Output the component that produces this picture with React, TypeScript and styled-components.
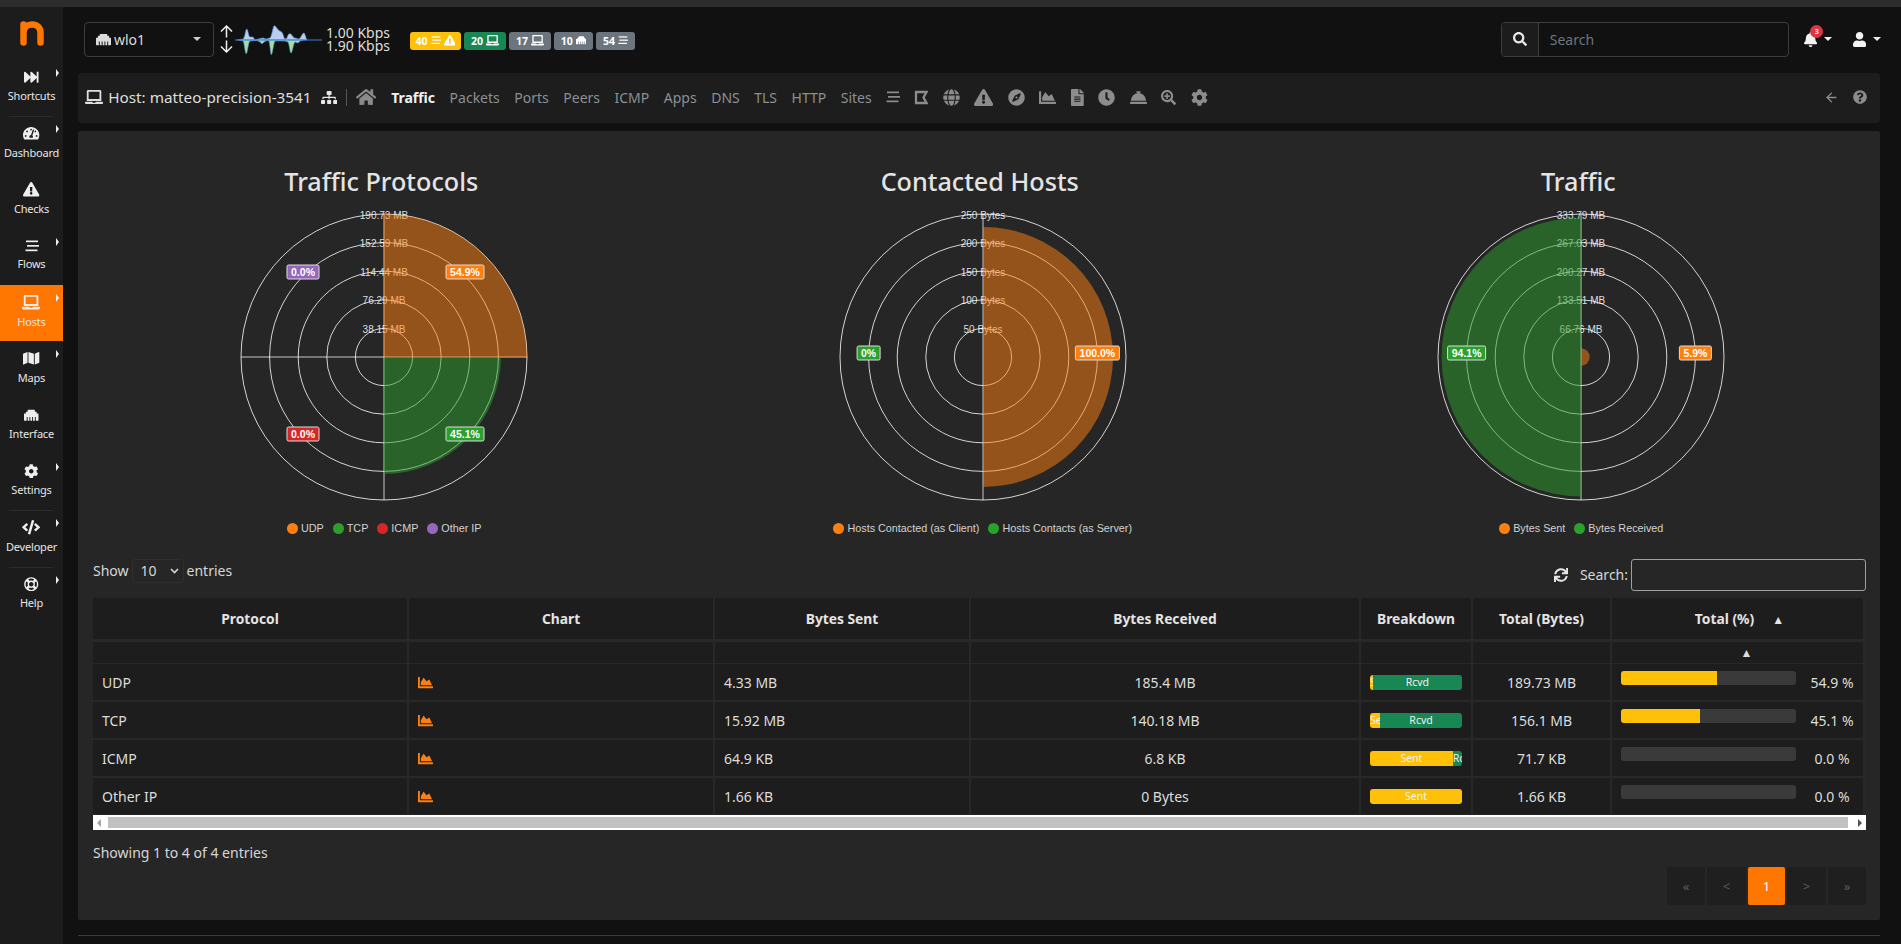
import React from "react";
import styled, { createGlobalStyle } from "styled-components";
import { ArrowLeft } from "lucide-react";
import {
  FaFastForward,
  FaTachometerAlt,
  FaExclamationTriangle,
  FaLaptop,
  FaMap,
  FaEthernet,
  FaCog,
  FaCode,
  FaRegLifeRing,
  FaSearch,
  FaBell,
  FaUser,
  FaSync,
  FaChartArea,
  FaFileAlt,
  FaClock,
  FaConciergeBell,
  FaSearchPlus,
  FaCompass,
  FaGlobe,
  FaQuestionCircle,
  FaSitemap,
  FaHome,
} from "react-icons/fa";

const UI_FONT = `"Noto Sans", "Open Sans", sans-serif`;

const GlobalStyle = createGlobalStyle`
  html, body {
    margin: 0;
    padding: 0;
    background: #111111;
    color: #e3e3e3;
    font-family: ${UI_FONT};
    font-size: 14px;
    overflow: hidden;
  }
  * { box-sizing: border-box; }
`;

// react-icons draws everything in a 1em square, these glyphs are not square
const LaptopIcon = styled(FaLaptop)`
  width: 1.25em;
`;
const WarnIcon = styled(FaExclamationTriangle)`
  width: 1.125em;
`;
const GaugeIcon = styled(FaTachometerAlt)`
  width: 1.125em;
`;
const MapIcon = styled(FaMap)`
  width: 1.125em;
`;
const CodeIcon = styled(FaCode)`
  width: 1.25em;
`;
const SitemapIcon = styled(FaSitemap)`
  width: 1.25em;
`;
const HouseIcon = styled(FaHome)`
  width: 1.125em;
`;
const BellIcon = styled(FaBell)`
  width: 0.875em;
`;
const UserIcon = styled(FaUser)`
  width: 0.875em;
`;
const FileIcon = styled(FaFileAlt)`
  width: 0.75em;
`;

const Page = styled.div`
  width: 1901px;
  height: 944px;
  display: flex;
  flex-direction: column;
  background: #111111;
`;

const TopStrip = styled.div`
  height: 7px;
  background: #2c2c2c;
  flex: none;
`;

const Body = styled.div`
  flex: 1;
  display: flex;
  min-height: 0;
`;

const Sidebar = styled.nav`
  width: 63px;
  flex: none;
  background: #1c1c1c;
  display: flex;
  flex-direction: column;
`;

const Logo = styled.div`
  height: 53px;
  display: flex;
  align-items: center;
  justify-content: center;
`;

const SideItem = styled.div<{ $active?: boolean; $caret?: boolean; $plain?: boolean }>`
  position: relative;
  height: 56.3px;
  padding-bottom: 4px;
  display: flex;
  flex-direction: column;
  align-items: center;
  justify-content: center;
  gap: 5px;
  color: #e6e6e6;
  font-size: 11px;
  line-height: 13px;
  letter-spacing: -0.2px;
  background: ${(p) => (p.$active ? "#ff7700" : "transparent")};

  svg {
    font-size: 14.5px;
    color: #eeeeee;
  }

  &::after {
    content: "";
    display: ${(p) => (p.$caret ? "block" : "none")};
    position: absolute;
    right: 4px;
    top: 9px;
    border-left: 3px solid #eeeeee;
    border-top: 4px solid transparent;
    border-bottom: 4px solid transparent;
  }

  & + &::before {
    content: "";
    position: absolute;
    left: 9px;
    right: 10px;
    top: 0;
    height: 1px;
    background: #2b2b2b;
    display: ${(p) => (p.$plain ? "none" : "block")};
  }
`;

const Main = styled.main`
  flex: 1;
  min-width: 0;
  padding: 0 21px 0 15px;
  display: flex;
  flex-direction: column;
`;

const TopBar = styled.header`
  height: 66px;
  flex: none;
  display: flex;
  align-items: center;
  padding: 0 0 2px 6px;
  margin-right: -1px;
`;

const IfaceSelect = styled.div`
  width: 130px;
  height: 35px;
  border: 1px solid #3d3d3d;
  border-radius: 4px;
  display: flex;
  align-items: center;
  padding: 0 12px 0 11px;
  gap: 3px;
  font-size: 14px;
  color: #dcdcdc;

  svg {
    font-size: 15px;
    color: #dcdcdc;
  }
`;

const Caret = styled.span<{ $color?: string }>`
  display: inline-block;
  border-top: 4px solid ${(p) => p.$color || "#cfcfcf"};
  border-left: 4px solid transparent;
  border-right: 4px solid transparent;
`;

const SelectLabel = styled.span`
  flex: 1;
`;

const Arrows = styled.svg`
  margin-left: 6px;
  flex: none;
`;

const Spark = styled.svg`
  margin-left: 2px;
  flex: none;
`;

const Rates = styled.div`
  margin-left: 4px;
  width: 84px;
  font-size: 14px;
  line-height: 13px;
  color: #dedede;
`;

const Badges = styled.div`
  display: flex;
  gap: 3px;
  margin-top: 3px;
`;

const Badge = styled.span<{ $bg: string; $w: number }>`
  height: 18px;
  width: ${(p) => p.$w}px;
  display: flex;
  align-items: center;
  justify-content: center;
  gap: 3px;
  border-radius: 3px;
  background: ${(p) => p.$bg};
  color: #fff;
  font-size: 10.5px;
  font-weight: 700;

  svg {
    font-size: 10.5px;
  }
`;

const SearchBox = styled.div`
  margin-left: auto;
  width: 288px;
  height: 35px;
  border: 1px solid #3d3d3d;
  border-radius: 4px;
  display: flex;
  align-items: stretch;
`;

const SearchAddon = styled.div`
  width: 37px;
  background: #1c1c1c;
  border-right: 1px solid #3d3d3d;
  border-radius: 3px 0 0 3px;
  display: flex;
  align-items: center;
  justify-content: center;
  font-size: 14px;
  color: #e8e8e8;
`;

const SearchHint = styled.div`
  padding-left: 11px;
  display: flex;
  align-items: center;
  font-size: 14px;
  color: #6d757d;
`;

const UserTool = styled.div<{ $left: number }>`
  position: relative;
  margin-left: ${(p) => p.$left}px;
  display: flex;
  align-items: center;
  gap: 7px;
  color: #f2f2f2;
  font-size: 15px;
`;

const Count = styled.span`
  position: absolute;
  left: 6.5px;
  top: -7px;
  width: 13px;
  height: 13px;
  border-radius: 50%;
  background: #dc3545;
  color: #fff;
  font-size: 7px;
  font-weight: 700;
  display: flex;
  align-items: center;
  justify-content: center;
`;

const NavBar = styled.div`
  height: 50px;
  flex: none;
  background: #1d1d1d;
  border-radius: 4px;
  display: flex;
  align-items: center;
  padding: 0 13px 2px 7px;
  color: #8a8f94;
`;

const HostTitle = styled.div`
  display: flex;
  align-items: center;
  gap: 5px;
  color: #dedede;
  font-size: 15.3px;
  svg {
    font-size: 14.5px;
  }
`;

const TitleTool = styled.span`
  margin-left: 9px;
  color: #e8e8e8;
  font-size: 13px;
  padding-right: 9px;
  border-right: 1px solid #555;
  height: 17px;
  display: flex;
  align-items: center;
`;

const HomeLink = styled.span`
  margin-left: 9px;
  margin-right: 15px;
  font-size: 18px;
  line-height: 0;
  color: #8a8a8a;
`;

const Tabs = styled.div`
  display: flex;
  gap: 14.5px;
  font-size: 14px;
`;

const Tab = styled.span<{ $active?: boolean }>`
  color: ${(p) => (p.$active ? "#f2f2f2" : "#8a9096")};
  font-weight: ${(p) => (p.$active ? 700 : 400)};
`;

const IconTabs = styled.div`
  display: flex;
  align-items: center;
  margin-left: 14px;
  gap: 14.5px;
  color: #8c8c8c;
  font-size: 17px;
  svg {
    display: block;
  }
`;

const NavRight = styled.div`
  margin-left: auto;
  display: flex;
  align-items: center;
  gap: 14px;
  font-size: 14px;
  color: #8c8c8c;
`;

const Panel = styled.section`
  margin-top: 8px;
  height: 789px;
  flex: none;
  background: #262626;
  border-radius: 2px;
  padding: 0 15px;
`;

const ChartRow = styled.div`
  display: grid;
  grid-template-columns: repeat(3, 598.5px);
  margin-left: -11px;
  padding-top: 32px;
  height: 421px;
`;

const ChartCol = styled.div`
  display: flex;
  flex-direction: column;
  align-items: center;
`;

const ChartTitle = styled.h3`
  margin: 0;
  height: 36px;
  font-size: 25.2px;
  line-height: 36px;
  font-weight: 500;
  color: #e4e4e4;
`;

const ChartSvg = styled.svg`
  display: block;
  margin-top: 8px;
`;

const Legend = styled.div`
  display: flex;
  justify-content: center;
  gap: 9px;
  margin-top: 15px;
  padding-left: 6px;
  font-family: "Liberation Sans", Arial, sans-serif;
  font-size: 10.8px;
  line-height: 12px;
  color: #d2d2d2;
`;

const LegendItem = styled.span<{ $color: string }>`
  display: flex;
  align-items: center;
  gap: 3px;
  &::before {
    content: "";
    width: 11px;
    height: 11px;
    border-radius: 50%;
    background: ${(p) => p.$color};
  }
`;

const TableTools = styled.div`
  height: 46px;
  display: flex;
  align-items: center;
  justify-content: space-between;
  font-size: 14px;
  color: #d6d6d6;
`;

const Entries = styled.label`
  display: flex;
  align-items: center;
  gap: 3px;
  margin-top: -9px;
`;

const EntriesSelect = styled.span`
  width: 52px;
  height: 24px;
  border: 1px solid #2e2e2e;
  border-radius: 3px;
  display: flex;
  align-items: center;
  justify-content: space-between;
  padding: 0 4px 0 8px;
  font-size: 14px;
  svg {
    display: block;
  }
`;

const SearchField = styled.div`
  display: flex;
  align-items: center;
  gap: 3px;
  margin-right: -1px;
  margin-top: -1px;
  svg {
    margin-right: 9px;
    font-size: 14px;
    color: #e8e8e8;
  }
`;

const SearchInput = styled.div`
  width: 235px;
  height: 32px;
  border: 1px solid #a0a0a0;
  border-radius: 3px;
`;

const Table = styled.table`
  width: 1772px;
  table-layout: fixed;
  border-collapse: separate;
  border-spacing: 0;
  color: #dcdcdc;
  font-size: 14px;
`;

const Th = styled.th<{ $sorted?: boolean }>`
  height: 44px;
  background: #1d1d1d;
  border-right: 2px solid #282828;
  border-bottom: 3px solid #282828;
  font-weight: 700;
  font-size: 13.8px;
  color: #e4e4e4;
  padding: 0 0 0 ${(p) => (p.$sorted ? 4 : 0)}px;
`;

const SortMark = styled.span`
  margin-left: 18px;
  font-size: 12px;
`;

const FilterCell = styled.td`
  height: 22px;
  padding: 0 0 0 18px;
  background: #1d1d1d;
  border-right: 2px solid #282828;
  border-bottom: 1px solid #282828;
  text-align: center;
  font-size: 12px;
  line-height: 10px;
`;

const Td = styled.td<{ $align?: string }>`
  height: 38px;
  padding: 0 9px;
  background: #1d1d1d;
  border-right: 2px solid #282828;
  border-bottom: 2px solid #282828;
  text-align: ${(p) => p.$align || "left"};
  white-space: nowrap;
  overflow: hidden;
`;

const LastTd = styled(Td)`
  border-bottom: 0;
  height: 36px;
`;

const ChartLink = styled.span`
  display: block;
  color: #fd7e14;
  font-size: 15px;
  line-height: 0;
  svg {
    display: block;
  }
`;

const Breakdown = styled.div`
  height: 15px;
  width: 92px;
  display: flex;
  border-radius: 3px;
  overflow: hidden;
  margin-top: 1px;
  color: #f2f2f2;
  font-size: 10.5px;
  line-height: 15px;
  text-align: center;
`;

const BreakSeg = styled.span<{ $bg: string }>`
  background: ${(p) => p.$bg};
  overflow: hidden;
  white-space: nowrap;
`;

const ProgressCell = styled.div`
  display: flex;
  align-items: center;
  justify-content: space-between;
  margin-right: -5px;
`;

const Progress = styled.div`
  width: 175px;
  height: 14px;
  border-radius: 3px;
  background: #3a3a3a;
  overflow: hidden;
  margin-top: -9px;
`;

const ProgressFill = styled.div`
  height: 100%;
  background: #ffc107;
`;

const PctText = styled.span`
  width: 54px;
  text-align: center;
`;

const ScrollBar = styled.div`
  width: 1773px;
  height: 15px;
  margin-top: 1px;
  background: #ffffff;
  display: flex;
  align-items: center;
  justify-content: space-between;
  padding: 2px 0;
`;

const ScrollTrack = styled.div`
  flex: 1;
  height: 11px;
  margin: 0 6px 0 3px;
  background: #c1c1c1;
`;

const ScrollArrow = styled.span<{ $dir: "left" | "right" }>`
  width: 0;
  height: 0;
  margin: 0 4px;
  border-top: 4px solid transparent;
  border-bottom: 4px solid transparent;
  ${(p) =>
    p.$dir === "left"
      ? "border-right: 4px solid #a3a3a3;"
      : "border-left: 4px solid #505050;"}
`;

const TableFooter = styled.div`
  display: flex;
  justify-content: space-between;
  margin-top: 11px;
`;

const Info = styled.div`
  font-size: 14px;
  color: #d6d6d6;
  line-height: 24px;
`;

const Pager = styled.div`
  display: flex;
  gap: 2px;
  margin-top: 26px;
  margin-right: -1px;
`;

const PageBtn = styled.span<{ $active?: boolean; $w: number }>`
  width: ${(p) => p.$w}px;
  height: 38px;
  display: flex;
  align-items: center;
  justify-content: center;
  border-radius: 2px;
  font-size: 13px;
  color: ${(p) => (p.$active ? "#fff" : "#5c5c5c")};
  background: ${(p) => (p.$active ? "#ff7700" : "#1f1f1f")};
`;

const Footer = styled.div`
  margin-top: 15px;
  height: 1px;
  background: #3a3a3a;
  flex: none;
`;

const polar = (cx: number, cy: number, r: number, deg: number) => {
  const a = ((deg - 90) * Math.PI) / 180;
  return [cx + r * Math.cos(a), cy + r * Math.sin(a)];
};

const wedge = (cx: number, cy: number, r: number, from: number, to: number) => {
  const [x1, y1] = polar(cx, cy, r, from);
  const [x2, y2] = polar(cx, cy, r, to);
  return `M${cx} ${cy} L${x1} ${y1} A${r} ${r} 0 0 1 ${x2} ${y2} Z`;
};

type Slice = { r: number; from: number; to: number; color: string };
type Tag = { x: number; y: number; w: number; text: string; color: string };

type PolarProps = {
  ticks: string[];
  slices: Slice[];
  tags: Tag[];
  spokes: number[];
};

// center of the plot sits 3px right of the column center
const CX = 302;
const CY = 150;
const R = 143;

const PolarChart: React.FC<PolarProps> = ({ ticks, slices, tags, spokes }) => (
  <ChartSvg width={598} height={300} viewBox="0 0 598 300">
    {[1, 2, 3, 4, 5].map((n) => (
      <circle
        key={n}
        cx={CX}
        cy={CY}
        r={(R / 5) * n}
        fill="none"
        stroke="#ffffff"
        strokeOpacity={0.8}
        strokeWidth={1}
      />
    ))}
    {spokes.map((deg) => {
      const [x, y] = polar(CX, CY, R, deg);
      return (
        <line
          key={deg}
          x1={CX}
          y1={CY}
          x2={x}
          y2={y}
          stroke="#ffffff"
          strokeOpacity={0.75}
          strokeWidth={1}
        />
      );
    })}
    {ticks.map((t, i) => (
      <text
        key={t}
        x={CX}
        y={CY - (R / 5) * (i + 1) + 4.5}
        textAnchor="middle"
        fontFamily="Liberation Sans, Arial, sans-serif"
        fontSize={10}
        fill="#ffffff"
        fillOpacity={0.85}
      >
        {t}
      </text>
    ))}
    {/* slices go over grid and ticks, that is why the labels get tinted */}
    {slices.map((s, i) => (
      <path
        key={i}
        d={wedge(CX, CY, s.r, s.from, s.to)}
        fill={s.color}
        fillOpacity={0.5}
      />
    ))}
    {tags.map((t) => (
      <g key={t.text + t.x}>
        <rect
          x={CX + t.x - t.w / 2}
          y={CY + t.y - 7}
          width={t.w}
          height={14}
          rx={1.5}
          fill={t.color}
          stroke="#dddddd"
          strokeWidth={1}
        />
        <text
          x={CX + t.x}
          y={CY + t.y + 3.8}
          textAnchor="middle"
          fontFamily="Liberation Sans, Arial, sans-serif"
          fontSize={10.5}
          fontWeight={700}
          fill="#ffffff"
        >
          {t.text}
        </text>
      </g>
    ))}
  </ChartSvg>
);

const ORANGE = "#ff7f0e";
const GREEN = "#2ca02c";
const RED = "#d62728";
const PURPLE = "#9467bd";

const Sparkline: React.FC = () => {
  const up =
    "M2 21 L8 20 C10 19 10.5 10 11.7 10 C13 10 13.5 18 15 18 L18 18 L20 21 L25 19.5 L28 19 L31 20 L35 19 C37 17 38 6.7 39.3 6.7 C41 6.7 43 12 46 12.5 C48 13 49 20 50 20 L52 19 C53 15 54 14.7 55 14.7 C57 15 58 19 60 19 L64 20 C66 19 67 14 69 14 C70 14 71 20 72 21 Z";
  const down =
    "M4 21 L8 22 C9.5 24 10 34.7 11.2 34.7 C12.5 34.7 13 24 15 22 L22 21.5 L25 23 L27 25 L29 23 L32 21.5 L34 22 C35 25 35.5 35.7 36.3 35.7 C37.5 35.7 38.5 24 40 22 L43 22 L50 22 L53 23 C54.5 26 55 34 56 34 C57.5 34 58 25 60 23 L63 24 L65 22 L68 21 Z";
  return (
    <Spark width={87} height={40} viewBox="0 0 87 40">
      <path d={up} fill="#b7cdf2" stroke="#5a8fd8" strokeWidth={0.6} />
      <path d={down} fill="#9ee29a" stroke="#5a8fd8" strokeWidth={0.6} />
      <line x1={0} y1={21} x2={87} y2={21} stroke="#3f7fe0" strokeWidth={1} />
    </Spark>
  );
};

const StreamIcon: React.FC<{ size?: number }> = ({ size = 14 }) => (
  <svg width={size} height={(size * 12) / 14} viewBox="0 0 14 12" fill="currentColor">
    <rect x="1" y="0.5" width="12" height="1.7" />
    <rect x="2" y="5" width="12" height="1.7" />
    <rect x="0.5" y="9.5" width="12" height="1.7" />
  </svg>
);

const FlagIcon: React.FC = () => (
  <svg width="14" height="15" viewBox="0 0 14 15">
    <path
      d="M2 2 H12.5 L9.5 7.5 L12.5 13 H2 Z"
      fill="none"
      stroke="currentColor"
      strokeWidth="2.3"
      strokeLinejoin="miter"
    />
  </svg>
);

const sideItems = [
  { icon: <FaFastForward />, label: "Shortcuts", caret: true },
  { icon: <GaugeIcon />, label: "Dashboard", caret: true },
  { icon: <WarnIcon />, label: "Checks" },
  { icon: <StreamIcon />, label: "Flows", caret: true },
  { icon: <LaptopIcon />, label: "Hosts", caret: true, active: true },
  { icon: <MapIcon />, label: "Maps", caret: true, plain: true },
  { icon: <FaEthernet />, label: "Interface" },
  { icon: <FaCog />, label: "Settings", caret: true },
  { icon: <CodeIcon />, label: "Developer", caret: true },
  { icon: <FaRegLifeRing />, label: "Help", caret: true },
];

const rows = [
  { name: "UDP", sent: "4.33 MB", rcvd: "185.4 MB", sentPct: 3, total: "189.73 MB", pct: 55, pctText: "54.9 %" },
  { name: "TCP", sent: "15.92 MB", rcvd: "140.18 MB", sentPct: 11, total: "156.1 MB", pct: 45, pctText: "45.1 %" },
  { name: "ICMP", sent: "64.9 KB", rcvd: "6.8 KB", sentPct: 90, total: "71.7 KB", pct: 0, pctText: "0.0 %" },
  { name: "Other IP", sent: "1.66 KB", rcvd: "0 Bytes", sentPct: 100, total: "1.66 KB", pct: 0, pctText: "0.0 %" },
];

const columnWidths = [316, 306, 256, 390, 112, 139, 253];

const App: React.FC = () => (
  <Page>
    <GlobalStyle />
    <TopStrip />
    <Body>
      <Sidebar>
        <Logo>
          <svg width="24" height="25" viewBox="0 0 24 25">
            <path
              d="M3.5 21.5 V3.5 M3.5 12 C3.5 6 8 3.5 12 3.5 C17 3.5 20.5 6.5 20.5 11.5 V21.5"
              fill="none"
              stroke="#ff7700"
              strokeWidth="6.5"
              strokeLinecap="round"
            />
          </svg>
        </Logo>
        {sideItems.map((item) => (
          <SideItem key={item.label} $active={item.active} $caret={item.caret} $plain={item.plain}>
            {item.icon}
            <span>{item.label}</span>
          </SideItem>
        ))}
      </Sidebar>

      <Main>
        <TopBar>
          <IfaceSelect>
            <FaEthernet />
            <SelectLabel>wlo1</SelectLabel>
            <Caret />
          </IfaceSelect>
          <Arrows width="13" height="28" viewBox="0 0 13 28">
            <path
              d="M6.5 12.5 V1 M1 6.5 L6.5 1 L12 6.5 M6.5 15.5 V27 M1 21.5 L6.5 27 L12 21.5"
              fill="none"
              stroke="#f0f0f0"
              strokeWidth="1.5"
            />
          </Arrows>
          <Sparkline />
          <Rates>
            1.00 Kbps
            <br />
            1.90 Kbps
          </Rates>
          <Badges>
            <Badge $bg="#ffc107" $w={51}>
              40 <StreamIcon size={10} /> <WarnIcon />
            </Badge>
            <Badge $bg="#198754" $w={42}>
              20 <LaptopIcon />
            </Badge>
            <Badge $bg="#6c757d" $w={42}>
              17 <LaptopIcon />
            </Badge>
            <Badge $bg="#6c757d" $w={39}>
              10 <FaEthernet />
            </Badge>
            <Badge $bg="#6c757d" $w={39}>
              54 <StreamIcon size={10} />
            </Badge>
          </Badges>
          <SearchBox>
            <SearchAddon>
              <FaSearch />
            </SearchAddon>
            <SearchHint>Search</SearchHint>
          </SearchBox>
          <UserTool $left={15}>
            <BellIcon />
            <Count>3</Count>
            <Caret $color="#eeeeee" />
          </UserTool>
          <UserTool $left={21}>
            <UserIcon />
            <Caret $color="#eeeeee" />
          </UserTool>
        </TopBar>

        <NavBar>
          <HostTitle>
            <LaptopIcon />
            Host: matteo-precision-3541
          </HostTitle>
          <TitleTool>
            <SitemapIcon />
          </TitleTool>
          <HomeLink>
            <HouseIcon />
          </HomeLink>
          <Tabs>
            <Tab $active>Traffic</Tab>
            <Tab>Packets</Tab>
            <Tab>Ports</Tab>
            <Tab>Peers</Tab>
            <Tab>ICMP</Tab>
            <Tab>Apps</Tab>
            <Tab>DNS</Tab>
            <Tab>TLS</Tab>
            <Tab>HTTP</Tab>
            <Tab>Sites</Tab>
          </Tabs>
          <IconTabs>
            <StreamIcon />
            <FlagIcon />
            <FaGlobe />
            <WarnIcon />
            <FaCompass />
            <FaChartArea />
            <FileIcon />
            <FaClock />
            <FaConciergeBell />
            <FaSearchPlus size={15} />
            <FaCog />
          </IconTabs>
          <NavRight>
            <ArrowLeft size={15} strokeWidth={2.2} />
            <FaQuestionCircle />
          </NavRight>
        </NavBar>

        <Panel>
          <ChartRow>
            <ChartCol>
              <ChartTitle>Traffic Protocols</ChartTitle>
              <PolarChart
                ticks={["38.15 MB", "76.29 MB", "114.44 MB", "152.59 MB", "190.73 MB"]}
                spokes={[0, 90, 180, 270]}
                slices={[
                  { r: 143, from: 0, to: 90, color: ORANGE },
                  { r: 117, from: 90, to: 180, color: GREEN },
                ]}
                tags={[
                  { x: 81, y: -85, w: 38, text: "54.9%", color: ORANGE },
                  { x: 81, y: 77, w: 38, text: "45.1%", color: GREEN },
                  { x: -81, y: 77, w: 32, text: "0.0%", color: RED },
                  { x: -81, y: -85, w: 32, text: "0.0%", color: PURPLE },
                ]}
              />
              <Legend>
                <LegendItem $color={ORANGE}>UDP</LegendItem>
                <LegendItem $color={GREEN}>TCP</LegendItem>
                <LegendItem $color={RED}>ICMP</LegendItem>
                <LegendItem $color={PURPLE}>Other IP</LegendItem>
              </Legend>
            </ChartCol>
            <ChartCol>
              <ChartTitle>Contacted Hosts</ChartTitle>
              <PolarChart
                ticks={["50 Bytes", "100 Bytes", "150 Bytes", "200 Bytes", "250 Bytes"]}
                spokes={[0, 180]}
                slices={[{ r: 130, from: 0, to: 180, color: ORANGE }]}
                tags={[
                  { x: 114.4, y: -4, w: 44, text: "100.0%", color: ORANGE },
                  { x: -114.4, y: -4, w: 23, text: "0%", color: GREEN },
                ]}
              />
              <Legend>
                <LegendItem $color={ORANGE}>Hosts Contacted (as Client)</LegendItem>
                <LegendItem $color={GREEN}>Hosts Contacts (as Server)</LegendItem>
              </Legend>
            </ChartCol>
            <ChartCol>
              <ChartTitle>Traffic</ChartTitle>
              <PolarChart
                ticks={["66.76 MB", "133.51 MB", "200.27 MB", "267.03 MB", "333.79 MB"]}
                spokes={[0, 180]}
                slices={[
                  { r: 8.7, from: 0, to: 180, color: ORANGE },
                  { r: 139.5, from: 180, to: 360, color: GREEN },
                ]}
                tags={[
                  { x: 114.4, y: -4, w: 32, text: "5.9%", color: ORANGE },
                  { x: -114.4, y: -4, w: 38, text: "94.1%", color: GREEN },
                ]}
              />
              <Legend>
                <LegendItem $color={ORANGE}>Bytes Sent</LegendItem>
                <LegendItem $color={GREEN}>Bytes Received</LegendItem>
              </Legend>
            </ChartCol>
          </ChartRow>

          <TableTools>
            <Entries>
              Show
              <EntriesSelect>
                10
                <svg width="9" height="6" viewBox="0 0 9 6">
                  <path d="M1 1 L4.5 4.5 L8 1" fill="none" stroke="#d6d6d6" strokeWidth="1.6" />
                </svg>
              </EntriesSelect>
              entries
            </Entries>
            <SearchField>
              <FaSync />
              Search:
              <SearchInput />
            </SearchField>
          </TableTools>

          <Table>
            <colgroup>
              {columnWidths.map((w, i) => (
                <col key={i} width={w} />
              ))}
            </colgroup>
            <thead>
              <tr>
                <Th>Protocol</Th>
                <Th>Chart</Th>
                <Th>Bytes Sent</Th>
                <Th>Bytes Received</Th>
                <Th>Breakdown</Th>
                <Th>Total (Bytes)</Th>
                <Th $sorted>
                  Total (%)
                  <SortMark>▲</SortMark>
                </Th>
              </tr>
              <tr>
                <FilterCell />
                <FilterCell />
                <FilterCell />
                <FilterCell />
                <FilterCell />
                <FilterCell />
                <FilterCell>▲</FilterCell>
              </tr>
            </thead>
            <tbody>
              {rows.map((row, i) => {
                const Cell = i === rows.length - 1 ? LastTd : Td;
                return (
                  <tr key={row.name}>
                    <Cell>{row.name}</Cell>
                    <Cell>
                      <ChartLink>
                        <FaChartArea />
                      </ChartLink>
                    </Cell>
                    <Cell>{row.sent}</Cell>
                    <Cell $align="center">{row.rcvd}</Cell>
                    <Cell>
                      <Breakdown>
                        <BreakSeg $bg="#ffc107" style={{ width: `${row.sentPct}%` }}>
                          Sent
                        </BreakSeg>
                        {row.sentPct < 100 && (
                          <BreakSeg $bg="#198754" style={{ width: `${100 - row.sentPct}%` }}>
                            Rcvd
                          </BreakSeg>
                        )}
                      </Breakdown>
                    </Cell>
                    <Cell $align="center">{row.total}</Cell>
                    <Cell>
                      <ProgressCell>
                        <Progress>
                          <ProgressFill style={{ width: `${row.pct}%` }} />
                        </Progress>
                        <PctText>{row.pctText}</PctText>
                      </ProgressCell>
                    </Cell>
                  </tr>
                );
              })}
            </tbody>
          </Table>
          <ScrollBar>
            <ScrollArrow $dir="left" />
            <ScrollTrack />
            <ScrollArrow $dir="right" />
          </ScrollBar>

          <TableFooter>
            <Info>Showing 1 to 4 of 4 entries</Info>
            <Pager>
              <PageBtn $w={38}>«</PageBtn>
              <PageBtn $w={39}>&lt;</PageBtn>
              <PageBtn $active $w={37}>1</PageBtn>
              <PageBtn $w={39}>&gt;</PageBtn>
              <PageBtn $w={38}>»</PageBtn>
            </Pager>
          </TableFooter>
        </Panel>
        <Footer />
      </Main>
    </Body>
  </Page>
);

export default App;
